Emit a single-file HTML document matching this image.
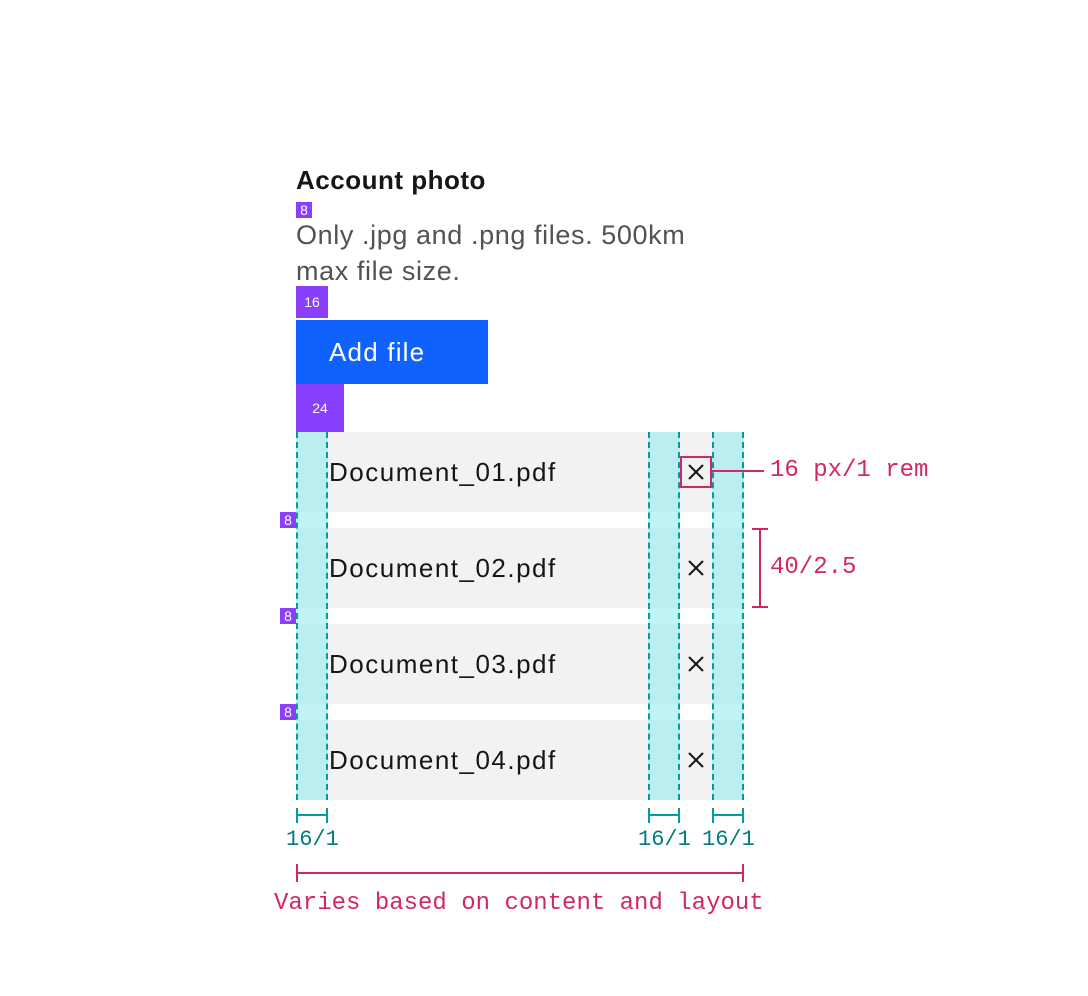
<!DOCTYPE html>
<html><head><meta charset="utf-8"><style>
body{margin:0;width:1088px;height:996px;background:#fff;position:relative;overflow:hidden;font-family:"Liberation Sans",sans-serif}
div,span{position:absolute;box-sizing:border-box}
.row{left:296px;width:448px;height:80px;background:#f2f2f2}
.doc{left:329px;font-size:26px;color:#161616;line-height:80px;letter-spacing:1.5px}
.col{top:432px;height:368px;width:32px;background:rgba(150,235,235,.6);border-left:2px dashed #009d9a;border-right:2px dashed #009d9a}
.b{background:#8a3ffc;color:#fff;font-size:14px;text-align:center}
.mono{font-family:"Liberation Mono",monospace}
</style></head><body>
<div style="left:296px;top:165px;font-size:26px;font-weight:bold;color:#161616;letter-spacing:0.5px">Account photo</div>
<div class="b" style="left:296px;top:202px;width:16px;height:16px;line-height:16px">8</div>
<div style="left:296px;top:217px;font-size:27px;line-height:36px;color:#525252;width:440px;letter-spacing:0.6px">Only .jpg and .png files. 500km<br>max file size.</div>
<div class="b" style="left:296px;top:286px;width:32px;height:32px;line-height:32px">16</div>
<div style="left:296px;top:320px;width:192px;height:64px;background:#0f62fe;color:#fff;font-size:26px;line-height:64px;padding-left:33px;letter-spacing:1.2px">Add file</div>
<div class="b" style="left:296px;top:384px;width:48px;height:48px;line-height:48px">24</div>
<div class="row" style="top:432px"></div><div class="row" style="top:528px"></div><div class="row" style="top:624px"></div><div class="row" style="top:720px"></div>
<div class="col" style="left:296px"></div><div class="col" style="left:648px"></div><div class="col" style="left:712px"></div>
<div class="doc" style="top:432px">Document_01.pdf</div>
<div class="doc" style="top:528px">Document_02.pdf</div>
<div class="doc" style="top:624px">Document_03.pdf</div>
<div class="doc" style="top:720px">Document_04.pdf</div>
<svg style="position:absolute;left:0;top:0" width="1088" height="996">
<g stroke="#161616" stroke-width="2">
<path d="M689 465l14 14M703 465l-14 14"/><path d="M689 561l14 14M703 561l-14 14"/><path d="M689 657l14 14M703 657l-14 14"/><path d="M689 753l14 14M703 753l-14 14"/></g>
<g stroke="#d12765" stroke-width="2" fill="none">
<rect x="681" y="457" width="30" height="30"/><path d="M712 471h52M760 529v78M752 529h16M752 607h16M297 873h446M297 864v18M743 864v18"/></g>
<g stroke="#009d9a" stroke-width="2"><path d="M297 815h30M297 808v15M327 808v15M649 815h30M649 808v15M679 808v15M713 815h30M713 808v15M743 808v15"/></g>
</svg>
<div class="b" style="left:280px;top:512px;width:16px;height:16px;line-height:16px">8</div>
<div class="b" style="left:280px;top:608px;width:16px;height:16px;line-height:16px">8</div>
<div class="b" style="left:280px;top:704px;width:16px;height:16px;line-height:16px">8</div>
<div class="mono" style="left:770px;top:457px;font-size:24px;color:#d12765;white-space:nowrap">16 px/1 rem</div>
<div class="mono" style="left:770px;top:554px;font-size:24px;color:#d12765">40/2.5</div>
<div class="mono" style="left:286px;top:827px;font-size:22px;color:#007d79">16/1</div>
<div class="mono" style="left:638px;top:827px;font-size:22px;color:#007d79">16/1</div>
<div class="mono" style="left:702px;top:827px;font-size:22px;color:#007d79">16/1</div>
<div class="mono" style="left:274px;top:890px;font-size:24px;color:#d12765;white-space:nowrap">Varies based on content and layout</div>
</body></html>
